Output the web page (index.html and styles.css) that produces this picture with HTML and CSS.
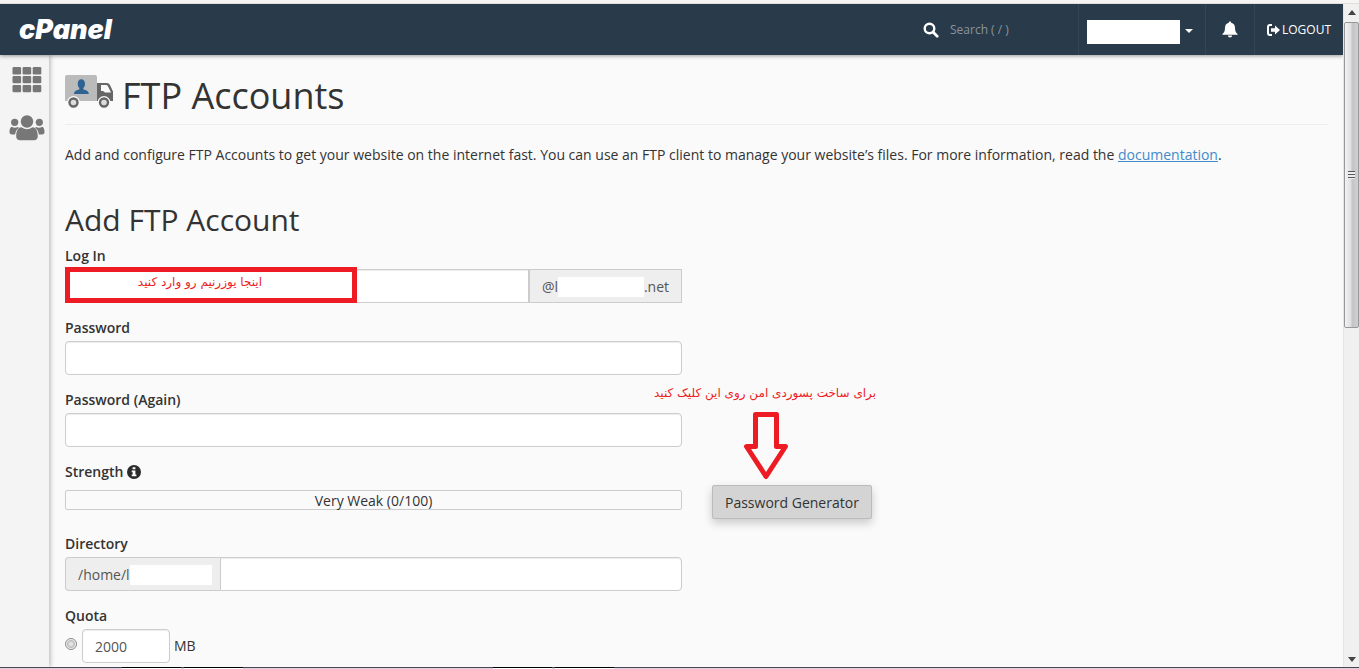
FILE: index.html
```html
<!DOCTYPE html>
<html lang="en">
<head>
<meta charset="utf-8">
<title>FTP Accounts</title>
<link rel="stylesheet" href="styles.css">
</head>
<body>
<div class="window">
  <div class="window-top"></div>
  <div class="viewport">
    <div class="page">
      <header class="topbar">
        <a class="brand" href="#" aria-label="cPanel home">
          <svg width="104" height="36" viewBox="0 0 104 36"><text class="brand-text" x="0" y="27">cPanel</text></svg>
        </a>
        <div class="topbar-search">
          <svg width="16" height="16" viewBox="0 0 16 16"><circle cx="6.5" cy="6.5" r="4.8" fill="none" stroke="#fff" stroke-width="2.4"/><path d="M10 10l4.200 4.200" stroke="#fff" stroke-width="2.800" stroke-linecap="round"/></svg>
          <input class="search-input" type="text" placeholder="Search ( / )" aria-label="Search">
        </div>
        <button class="topbar-item user-menu" type="button" aria-label="User menu"><span class="user-name"></span><span class="caret"></span></button>
        <button class="topbar-item bell" type="button" aria-label="Notifications">
          <svg width="16" height="17" viewBox="0 0 16 17"><path fill="#fff" d="M8 0.500c.8 0 1.200.5 1.200 1.200C11.800 2.200 13 4.200 13 6.700c0 3.600 1 5 2.600 6.400v.7H.4v-.7C2 11.700 3 10.300 3 6.700c0-2.500 1.200-4.500 3.800-5C6.800 1 7.200.5 8 .5zM5.900 14.500h4.200c0 1.300-.9 2-2.100 2s-2.100-.7-2.100-2z"/></svg>
        </button>
        <a class="topbar-item logout" href="#">
          <svg width="13" height="12" viewBox="0 0 13 12"><path d="M5 1H3Q1 1 1 3v6q0 2 2 2h2" fill="none" stroke="#fff" stroke-width="2"/><path d="M4 4.300h4V1.500l5 4.500-5 4.500V7.700H4z" fill="#fff"/></svg><span>LOGOUT</span>
        </a>
      </header>
      <div class="body">
        <nav class="sidebar">
          <a href="#" aria-label="Home">
            <svg width="30" height="26" viewBox="0 0 30 26" fill="#777"><rect x="0.500" width="8.600" height="7.400" rx="1.200"/><rect x="10.600" width="8.600" height="7.400" rx="1.200"/><rect x="20.700" width="8.600" height="7.400" rx="1.200"/><rect x="0.500" y="8.900" width="8.600" height="7.400" rx="1.200"/><rect x="10.600" y="8.900" width="8.600" height="7.400" rx="1.200"/><rect x="20.700" y="8.900" width="8.600" height="7.400" rx="1.200"/><rect x="0.500" y="17.900" width="8.600" height="7.400" rx="1.200"/><rect x="10.600" y="17.900" width="8.600" height="7.400" rx="1.200"/><rect x="20.700" y="17.900" width="8.600" height="7.400" rx="1.200"/></svg>
          </a>
          <a href="#" aria-label="User manager">
            <svg width="36" height="26" viewBox="0 0 36 26" fill="#777"><circle cx="18" cy="6.500" r="6.200"/><circle cx="5.700" cy="7.300" r="3.600"/><circle cx="30.300" cy="7.300" r="3.600"/><path d="M12.500 12.200q5.500 4 11 0c4 .2 5.300 4.500 5.300 9 0 2.600-1.500 4-4 4H11.200c-2.500 0-4-1.400-4-4 0-4.500 1.300-8.800 5.300-9z"/><path d="M2.700 11.700q3 1.800 6.200.3l1 .8c-2 1.400-3.500 3.900-3.800 6.700H3C1.200 19.500.5 18.500.5 17c0-2.400.6-4.800 2.200-5.300zM33.300 11.700q-3 1.800-6.200.3l-1 .8c2 1.400 3.500 3.900 3.800 6.700H33c1.800 0 2.500-1 2.500-2.500 0-2.400-.6-4.800-2.200-5.300z"/></svg>
          </a>
        </nav>
        <main class="content">
          <h1 class="page-title">
            <svg width="49" height="34" viewBox="0 0 49 34"><path d="M2 0h28q2 0 2 2v24H0V2q0-2 2-2z" fill="#bbb"/><path d="M12.700 9c0-3 1.400-4.800 3.600-4.800S20 6 20 9c0 2-.8 3.200-1.600 4v1.500c3 .6 5.400 1.700 5.400 4.500H9c0-2.800 2.400-3.900 5.300-4.500V13c-.8-.8-1.600-2-1.600-4z" fill="#2f6492"/><path d="M32 8h9.500c2 0 3.400 1.200 4.200 3.400l2.300 5.100V26H32zM36 10v6h2l2 1.500h6L43.300 12q-.6-2-2-2z" fill="#666" fill-rule="evenodd"/><circle cx="8.500" cy="27.500" r="6.500" fill="#fafafa"/><circle cx="39" cy="27.500" r="6.500" fill="#fafafa"/><circle cx="8.500" cy="27.500" r="4" fill="#ddd" stroke="#666" stroke-width="2.400"/><circle cx="39" cy="27.500" r="4" fill="#ddd" stroke="#666" stroke-width="2.400"/></svg>
            <span>FTP Accounts</span>
          </h1>
          <p class="intro">Add and configure FTP Accounts to get your website on the internet fast. You can use an FTP client to manage your website’s files. For more information, read the <a href="#">documentation</a>.</p>
          <h2 class="section-title">Add FTP Account</h2>
          <form class="ftp-form">
            <div class="field">
              <label for="login">Log In</label>
              <div class="input-group">
                <input class="control" id="login" type="text">
                <span class="addon addon-right">@l<span class="redacted"></span>.net</span>
                <div class="note-box" dir="rtl" lang="fa">اینجا یوزرنیم رو وارد کنید</div>
              </div>
            </div>
            <div class="field">
              <label for="password">Password</label>
              <input class="control" id="password" type="password">
            </div>
            <div class="field">
              <label for="password2">Password (Again)</label>
              <input class="control" id="password2" type="password">
            </div>
            <div class="field strength-field">
              <div class="label">Strength
                <svg width="14" height="14" viewBox="0 0 14 14"><circle cx="7" cy="7" r="7" fill="#2b2b2b"/><path d="M5.600 2.300h2.800v2H5.600zM4.700 5.600h3.700v4h1v1.700H4.700V9.600h1V7.200h-1z" fill="#fff"/></svg>
              </div>
              <div class="meter">Very Weak (0/100)</div>
              <div class="generator">
                <div class="note" dir="rtl" lang="fa">برای ساخت پسوردی امن روی این کلیک کنید</div>
                <svg class="arrow" width="48" height="70" viewBox="0 0 48 70"><path d="M13.500 3.500h21v32h9L24 65.500 4.500 35.500h9z" fill="#fafafa" stroke="#ed1c24" stroke-width="5" stroke-linejoin="round"/></svg>
                <button class="generate-button" type="button">Password Generator</button>
              </div>
            </div>
            <div class="field">
              <label for="directory">Directory</label>
              <div class="input-group">
                <span class="addon addon-left">/home/l<span class="redacted"></span></span>
                <input class="control" id="directory" type="text">
              </div>
            </div>
            <div class="field">
              <label for="quota">Quota</label>
              <div class="quota-row">
                <input class="radio" type="radio" name="quota-type" aria-label="Limited quota">
                <input class="control quota-input" id="quota" type="text" value="2000">
                <span>MB</span>
              </div>
            </div>
          </form>
        </main>
      </div>
    </div>
    <div class="scrollbar">
      <svg class="scroll-arrow" width="8" height="5" viewBox="0 0 8 5"><path d="M4 0l4 5H0z" fill="#444"/></svg>
      <div class="scroll-thumb"><span class="grip"></span></div>
      <svg class="scroll-arrow" width="8" height="5" viewBox="0 0 8 5"><path d="M0 0h8L4 5z" fill="#444"/></svg>
    </div>
  </div>
  <div class="window-bottom"><span class="tab"></span><span class="tab"></span><span class="tab tab-apart"></span><span class="tab"></span></div>
</div>
</body>
</html>
```
FILE: styles.css
```css
* { box-sizing: border-box; }
body {
  margin: 0;
  font-family: "Open Sans", "Noto Sans", sans-serif;
  font-size: 14px;
  line-height: 20px;
  color: #333;
  background: #fafafa;
}
svg { display: block; flex: none; }
.window {
  display: grid;
  grid-template-rows: 4px minmax(0, 1fr) 2px;
  height: 100vh;
}
.window-top { background: #f7f4f4; border-bottom: 1px solid #ddd; }
.viewport { display: flex; min-height: 0; }
.page {
  flex: 1;
  display: flex;
  flex-direction: column;
  min-width: 0;
  overflow: hidden;
}

/* Top bar */
.topbar {
  position: relative;
  z-index: 1;
  flex: none;
  display: flex;
  align-items: center;
  height: 51px;
  background: #293a4a;
  box-shadow: 0 1px 4px rgba(0, 0, 0, 0.4);
}
.brand { margin-left: 19px; margin-right: auto; }
.brand-text {
  font-family: Inter, "Open Sans", sans-serif;
  font-size: 27px;
  font-weight: 900;
  font-style: italic;
  fill: #fff;
}
.topbar-search {
  display: flex;
  align-items: center;
  gap: 11px;
  width: 155px;
}
.search-input {
  width: 100px;
  padding: 0;
  border: 0;
  background: none;
  font: inherit;
  font-size: 12px;
  color: #fff;
}
.search-input::placeholder { color: #8b949b; opacity: 1; }
.topbar-item {
  display: flex;
  align-items: center;
  justify-content: center;
  height: 100%;
  padding: 0 8px;
  border: 0;
  border-left: 1px solid #334658;
  background: none;
  color: #fff;
  font: inherit;
  font-size: 12px;
  text-decoration: none;
}
.user-menu { gap: 5px; width: 127px; justify-content: flex-start; }
.user-name { width: 93px; height: 24px; margin-top: 4px; background: #fff; }
.caret {
  border: 4px solid transparent;
  border-top-color: #fff;
  border-bottom: 0;
  margin-top: 3px;
}
.bell { width: 49px; }
.logout { gap: 2px; width: 89px; }

/* Side bar */
.body { flex: 1; display: flex; min-height: 0; }
.sidebar {
  flex: none;
  display: flex;
  flex-direction: column;
  align-items: center;
  gap: 22px;
  width: 49px;
  padding: 12px 0 0 5px;
  background: #f4f4f4;
  box-shadow: 1px 0 5px rgba(0, 0, 0, 0.3);
}

/* Content */
.content { flex: 1; min-width: 0; padding: 20px 15px 0 16px; }
.page-title {
  display: flex;
  align-items: flex-start;
  gap: 8px;
  margin: 0;
  padding-bottom: 7px;
  border-bottom: 1px solid #eee;
  font-size: 36px;
  font-weight: 400;
  line-height: 42px;
}
.intro { margin: 20px 0 0; }
.intro a { color: #428bca; text-decoration: underline; }
.section-title {
  margin: 39px 0 10px;
  font-size: 30px;
  font-weight: 400;
  line-height: 32px;
}
.ftp-form { width: 50%; max-width: 617px; }
.field { height: 72px; }
.field label,
.label {
  display: flex;
  align-items: center;
  gap: 4px;
  margin-bottom: 3px;
  font-weight: 600;
}
.control {
  display: block;
  width: 100%;
  height: 34px;
  padding: 6px 12px;
  border: 1px solid #ccc;
  border-radius: 4px;
  background: #fff;
  box-shadow: inset 0 1px 1px rgba(0, 0, 0, 0.075);
  font: inherit;
  color: #555;
}
.input-group { position: relative; display: flex; }
.input-group .control { flex: 1; min-width: 0; border-radius: 0; }
.addon {
  display: flex;
  align-items: center;
  height: 34px;
  padding: 2px 12px 0;
  border: 1px solid #ccc;
  background: #eee;
  color: #555;
}
.addon-right { width: 153px; }
.addon-left {
  width: 155px;
  padding-right: 8px;
  border-right: 0;
  border-radius: 4px 0 0 4px;
}
.addon-left + .control { border-radius: 0 4px 4px 0; }
.redacted { flex: 1; height: 20px; background: #fff; }

/* Persian notes */
.note-box,
.note {
  font-family: "DejaVu Sans", sans-serif;
  font-size: 12px;
  color: #ed1c24;
  white-space: nowrap;
}
.note-box {
  position: absolute;
  top: -2px;
  left: 0;
  width: 292px;
  height: 36px;
  padding: 0 90px 0 0;
  border: 5px solid #ed1c24;
  background: #fff;
}
.strength-field { position: relative; }
.generator {
  position: absolute;
  top: -79px;
  left: 100%;
  display: flex;
  flex-direction: column;
  align-items: flex-start;
  padding-left: 30px;
}
.note { margin-left: -58px; }
.arrow { margin: 8px 0 4px 30px; }
.generate-button {
  height: 34px;
  padding: 2px 12px 0;
  border: 1px solid #bbb;
  border-radius: 2px;
  background: #d4d4d4;
  box-shadow: 0 4px 10px rgba(0, 0, 0, 0.2);
  font: inherit;
  color: #333;
  white-space: nowrap;
}
.meter {
  height: 20px;
  margin-top: 8px;
  border: 1px solid #ccc;
  border-radius: 2px;
  text-align: center;
}
.quota-row { display: flex; align-items: center; gap: 4px; }
.quota-row .quota-input { width: 88px; }
.radio {
  appearance: none;
  width: 12px;
  height: 12px;
  margin: 0 1px 4px 0;
  border: 1px solid #8a8a8a;
  border-radius: 50%;
  background: radial-gradient(circle, #e4e4e4 20%, #bdbdbd 50%, #f4f4f4 65%);
}

/* Window frame */
.scrollbar {
  flex: none;
  display: flex;
  flex-direction: column;
  align-items: center;
  width: 16px;
  padding: 6px 0 5px;
  border-left: 1px solid #e6e6e6;
  background: #f0f0f0;
}
.scroll-thumb {
  display: flex;
  align-items: center;
  justify-content: center;
  width: 15px;
  height: 47%;
  margin: 7px 0 auto;
  border: 1px solid #979797;
  border-radius: 2px;
  background: linear-gradient(90deg, #f3f3f3, #dedee0 45%, #c4c4c8 55%, #d0d0d3);
}
.grip {
  width: 7px;
  height: 8px;
  background: repeating-linear-gradient(#555 0 1px, #eee 1px 3px);
}
.window-bottom {
  display: flex;
  gap: 3px;
  padding-left: 122px;
  border-top: 1px solid #4e4653;
  background: #ddd0e0;
}
.tab { width: 59px; height: 2px; margin-top: -1px; border-top: 1px solid #000; background: #fff; }
.tab-apart { margin-left: 247px; }
```
